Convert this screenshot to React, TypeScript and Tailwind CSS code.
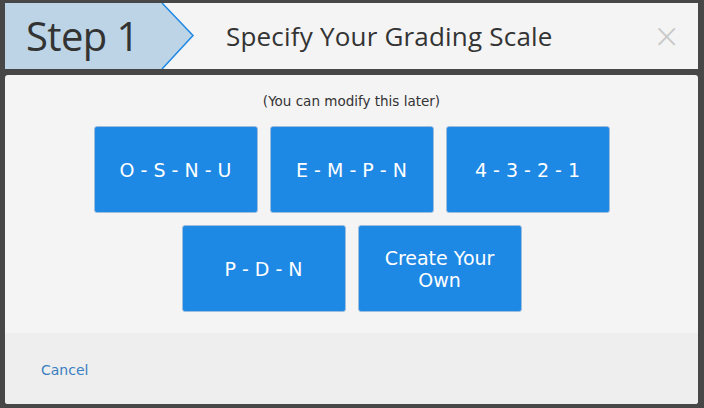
import React from 'react'

const SCALES = ['O - S - N - U', 'E - M - P - N', '4 - 3 - 2 - 1']

function ScaleButton({ children }: { children: React.ReactNode }) {
  return (
    <button className="flex h-[87px] w-[164px] items-center justify-center rounded-[3px] border border-[#9fbddc] bg-[#1e88e5] px-3 text-center text-[19px] leading-[22px] text-white">
      {children}
    </button>
  )
}

export default function App() {
  return (
    <div className="flex h-[408px] w-[704px] flex-col bg-[#474747] pl-[5px] pr-[6px] pt-[3px] font-['Open_Sans',sans-serif]">
      {/* Header */}
      <div className="flex h-[66px] shrink-0 items-center bg-[#f4f4f4]">
        <div className="relative flex h-full w-[190px] shrink-0 items-center">
          <svg className="absolute inset-0" width="190" height="66" viewBox="0 0 190 66">
            <polygon points="0,0 157,0 188,32.5 157,66 0,66" fill="#bcd4e6" />
            <polyline points="157,0 188,32.5 157,66" fill="none" stroke="#1e88e5" strokeWidth="1.5" />
          </svg>
          <span className="relative pl-[21px] text-[40px] leading-none tracking-[-0.6px] text-[#333]">Step 1</span>
        </div>
        <h1 className="ml-[31px] flex-1 text-[26px] leading-none tracking-[0.2px] text-[#333]">Specify Your Grading Scale</h1>
        <span className="mr-[20px] text-[40px] font-light leading-none text-[#c8c8c8]">×</span>
      </div>

      {/* Body */}
      <div className="mt-[6px] flex h-[329px] flex-col overflow-hidden rounded-[3px] bg-[#f4f4f4] font-['DejaVu_Sans',sans-serif]">
        <div className="flex flex-1 flex-col items-center pt-[17px]">
          <p className="text-[13.5px] leading-[18px] text-[#333]">(You can modify this later)</p>
          <div className="mt-[16px] flex gap-3">
            {SCALES.map((s) => (
              <ScaleButton key={s}>{s}</ScaleButton>
            ))}
          </div>
          <div className="mt-3 flex gap-3">
            <ScaleButton>P - D - N</ScaleButton>
            <ScaleButton>Create Your Own</ScaleButton>
          </div>
        </div>
        <div className="flex h-[71px] items-center bg-[#eeeeee] px-9 pt-1">
          <a className="text-[14px] text-[#3a7fc1]">Cancel</a>
        </div>
      </div>
    </div>
  )
}
